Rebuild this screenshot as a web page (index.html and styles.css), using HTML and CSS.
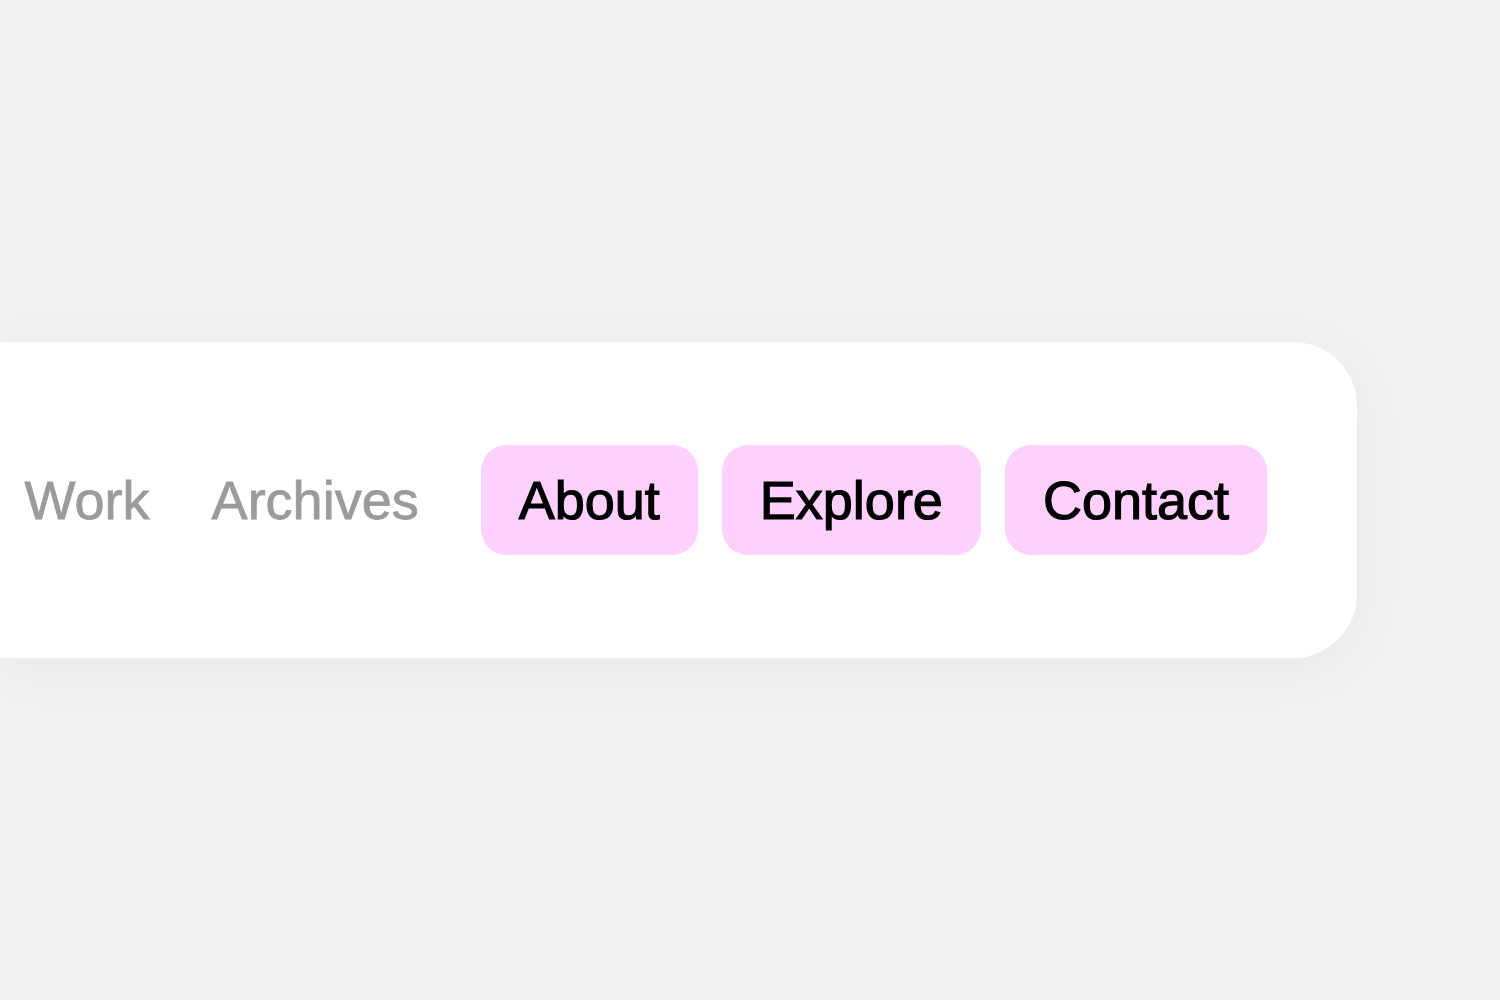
FILE: index.html
```html
<html>
	<head>
		<link rel="stylesheet" href="styles.css">
	</head>
	<body>
		<nav class="bar">
			<a class="link" href="#">Work</a>
			<a class="link" href="#">Archives</a>
			<div class="pills">
				<a class="pill" href="#">About</a>
				<a class="pill" href="#">Explore</a>
				<a class="pill" href="#">Contact</a>
			</div>
		</nav>
	</body>
</html>
```

FILE: styles.css
```css
body {
	margin: 0;
	background-color: #f2f2f4;
	font-family: "Liberation Sans", Arial, sans-serif;
}

.bar {
	margin-top: 342px;
	width: 1357px;
	height: 316px;
	box-sizing: border-box;
	padding-right: 90px;
	display: flex;
	align-items: center;
	justify-content: flex-end;
	gap: 62px;
	background-color: white;
	border-radius: 0 64px 64px 0;
	box-shadow: 0 10px 60px rgba(0, 0, 0, 0.05);
}

.link {
	color: #9b9b9b;
	text-decoration: none;
	font-size: 54px;
	-webkit-text-stroke: 0.8px #9b9b9b;
}

.pills {
	display: flex;
	gap: 24px;
}

.pill {
	height: 110px;
	padding: 0 38px;
	display: flex;
	align-items: center;
	background-color: #fdd0fd;
	border-radius: 26px;
	color: black;
	text-decoration: none;
	font-size: 54px;
	-webkit-text-stroke: 1.2px black;
}
```
